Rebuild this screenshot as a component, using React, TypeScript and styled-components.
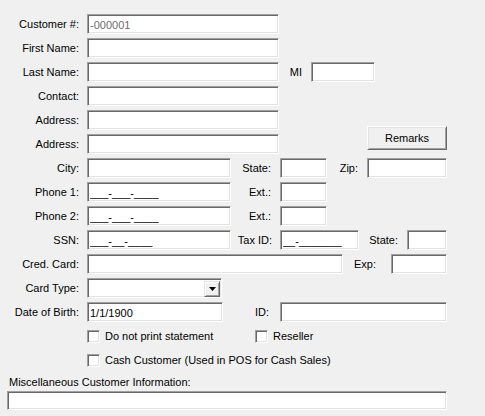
import styled, { createGlobalStyle } from "styled-components";

const GlobalStyle = createGlobalStyle`
  html, body {
    margin: 0;
    padding: 0;
    background: #f0f0f0;
  }
  body {
    font-family: "Liberation Sans", Arial, sans-serif;
    font-size: 11px;
    color: #000;
  }
`;

const Form = styled.div`
  width: 485px;
  height: 416px;
  box-sizing: border-box;
  padding-top: 14px;
  display: flex;
  flex-direction: column;
  gap: 4px;
`;

const Row = styled.div`
  display: flex;
  align-items: center;
  height: 20px;
`;

const Label = styled.div`
  width: 79px;
  margin-right: 8px;
  text-align: right;
  white-space: nowrap;
`;

const SideLabel = styled.div<{ $w: number; $pr?: number }>`
  width: ${(p) => p.$w}px;
  padding-right: ${(p) => p.$pr ?? 9}px;
  box-sizing: border-box;
  text-align: right;
  white-space: nowrap;
`;

const Field = styled.input<{ $w: number; $muted?: boolean }>`
  width: ${(p) => p.$w}px;
  height: 20px;
  box-sizing: border-box;
  margin: 0;
  padding: 1px 0 0 2px;
  background: #fff;
  border: 1px solid;
  border-color: #a0a0a0 #ffffff #ffffff #a0a0a0;
  box-shadow: inset 1px 1px 0 #696969, inset -1px -1px 0 #e3e3e3;
  font: inherit;
  color: ${(p) => (p.$muted ? "#6d6d6d" : "#000")};
  outline: none;
`;

const RemarksButton = styled.button`
  width: 80px;
  height: 24px;
  margin: -8px 0 0 88px;
  align-self: flex-start;
  box-sizing: border-box;
  padding: 0;
  background: #f0f0f0;
  border: 1px solid;
  border-color: #ffffff #696969 #696969 #ffffff;
  box-shadow: inset 1px 1px 0 #e3e3e3, inset -1px -1px 0 #a0a0a0;
  font: inherit;
  color: #000;
`;

const Select = styled.div<{ $w: number }>`
  width: ${(p) => p.$w}px;
  height: 20px;
  box-sizing: border-box;
  display: flex;
  justify-content: flex-end;
  padding: 1px;
  background: #fff;
  border: 1px solid;
  border-color: #a0a0a0 #ffffff #ffffff #a0a0a0;
  box-shadow: inset 1px 1px 0 #696969, inset -1px -1px 0 #e3e3e3;
`;

const DropButton = styled.div`
  width: 16px;
  height: 100%;
  box-sizing: border-box;
  margin-top: 1px;
  display: flex;
  align-items: center;
  justify-content: center;
  background: #f0f0f0;
  border: 1px solid;
  border-color: #e3e3e3 #696969 #696969 #e3e3e3;
  box-shadow: inset 1px 1px 0 #ffffff, inset -1px -1px 0 #a0a0a0;
`;

const CheckGroup = styled.label<{ $w?: number }>`
  display: flex;
  align-items: center;
  gap: 5px;
  width: ${(p) => (p.$w ? `${p.$w}px` : "auto")};
  white-space: nowrap;
`;

const CheckBox = styled.span`
  width: 13px;
  height: 13px;
  box-sizing: border-box;
  background: #fff;
  border: 1px solid;
  border-color: #a0a0a0 #ffffff #ffffff #a0a0a0;
  box-shadow: inset 1px 1px 0 #696969, inset -1px -1px 0 #e3e3e3;
`;

const Spacer = styled.div<{ $w: number }>`
  width: ${(p) => p.$w}px;
  flex-shrink: 0;
`;

const MiscLabel = styled.div`
  margin: 2px 0 0 9px;
  line-height: 13px;
`;

const MiscField = styled(Field)`
  margin: -2px 0 0 7px;
  height: 19px;
`;

const Check = ({ label, w }: { label: string; w?: number }) => (
  <CheckGroup $w={w}>
    <CheckBox />
    <span>{label}</span>
  </CheckGroup>
);

const App = () => {
  return (
    <>
      <GlobalStyle />
      <Form>
        <Row>
          <Label>Customer #:</Label>
          <Field $w={192} $muted readOnly value="-000001" />
        </Row>
        <Row>
          <Label>First Name:</Label>
          <Field $w={192} />
        </Row>
        <Row>
          <Label>Last Name:</Label>
          <Field $w={192} />
          <SideLabel $w={32}>MI</SideLabel>
          <Field $w={64} />
        </Row>
        <Row>
          <Label>Contact:</Label>
          <Field $w={192} />
        </Row>
        <Row>
          <Label>Address:</Label>
          <Field $w={192} />
        </Row>
        <Row>
          <Label>Address:</Label>
          <Field $w={192} />
          <RemarksButton>Remarks</RemarksButton>
        </Row>
        <Row>
          <Label>City:</Label>
          <Field $w={144} />
          <SideLabel $w={49}>State:</SideLabel>
          <Field $w={47} />
          <SideLabel $w={40}>Zip:</SideLabel>
          <Field $w={80} />
        </Row>
        <Row>
          <Label>Phone 1:</Label>
          <Field $w={144} readOnly value="___-___-____" />
          <SideLabel $w={49}>Ext.:</SideLabel>
          <Field $w={47} />
        </Row>
        <Row>
          <Label>Phone 2:</Label>
          <Field $w={144} readOnly value="___-___-____" />
          <SideLabel $w={49}>Ext.:</SideLabel>
          <Field $w={47} />
        </Row>
        <Row>
          <Label>SSN:</Label>
          <Field $w={144} readOnly value="___-__-____" />
          <SideLabel $w={49} $pr={8}>Tax ID:</SideLabel>
          <Field $w={79} readOnly value="__-_______" />
          <SideLabel $w={48}>State:</SideLabel>
          <Field $w={40} />
        </Row>
        <Row>
          <Label>Cred. Card:</Label>
          <Field $w={256} />
          <SideLabel $w={48} $pr={15}>Exp:</SideLabel>
          <Field $w={56} />
        </Row>
        <Row>
          <Label>Card Type:</Label>
          <Select $w={135}>
            <DropButton>
              <svg width="7" height="4" viewBox="0 0 7 4">
                <path d="M0 0h7L3.5 4z" fill="#000" />
              </svg>
            </DropButton>
          </Select>
        </Row>
        <Row>
          <Label>Date of Birth:</Label>
          <Field $w={136} readOnly value="1/1/1900" />
          <SideLabel $w={57} $pr={11}>ID:</SideLabel>
          <Field $w={167} />
        </Row>
        <Row>
          <Spacer $w={87} />
          <Check label="Do not print statement" w={168} />
          <Check label="Reseller" />
        </Row>
        <Row>
          <Spacer $w={87} />
          <Check label="Cash Customer (Used in POS for Cash Sales)" />
        </Row>
        <MiscLabel>Miscellaneous Customer Information:</MiscLabel>
        <MiscField $w={440} />
      </Form>
    </>
  );
};

export default App;
